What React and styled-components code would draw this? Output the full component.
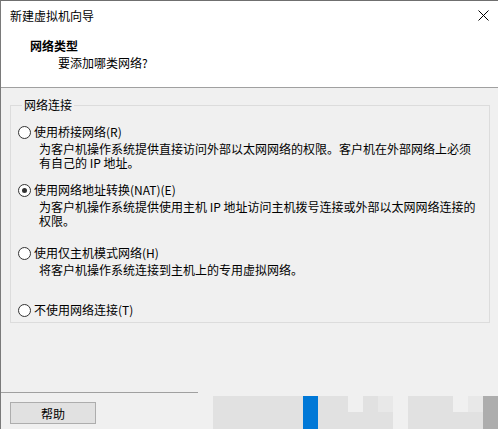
import React from 'react';
import styled, { createGlobalStyle } from 'styled-components';

const GlobalStyle = createGlobalStyle`
  html, body {
    margin: 0;
    padding: 0;
    background: #f0f0f0;
  }
  body {
    font-family: "Noto Sans CJK SC", "Noto Sans", sans-serif;
    font-size: 12px;
    color: #000;
  }
`;

// данные для вариантов подключения
const options = [
  {
    id: 'bridge',
    label: '使用桥接网络(R)',
    lines: ['为客户机操作系统提供直接访问外部以太网网络的权限。客户机在外部网络上必须', '有自己的 IP 地址。'],
    gap: 13,
  },
  {
    id: 'nat',
    label: '使用网络地址转换(NAT)(E)',
    lines: ['为客户机操作系统提供使用主机 IP 地址访问主机拨号连接或外部以太网网络连接的', '权限。'],
    gap: 13,
    checked: true,
  },
  {
    id: 'host',
    label: '使用仅主机模式网络(H)',
    lines: ['将客户机操作系统连接到主机上的专用虚拟网络。'],
    gap: 18,
  },
  {
    id: 'none',
    label: '不使用网络连接(T)',
    lines: [],
    gap: 26,
  },
];

// пикселизованный блок кнопок справа внизу (верх / низ)
const mosaic = [
  ['#e1e1e1', '#e1e1e1'], ['#e1e1e1', '#e1e1e1'], ['#e1e1e1', '#e1e1e1'],
  ['#e1e1e1', '#e1e1e1'], ['#e1e1e1', '#e1e1e1'], ['#e1e1e1', '#e1e1e1'],
  ['#0078d7', '#0078d7'], ['#e1e1e1', '#e1e1e1'], ['#e1e1e1', '#e1e1e1'],
  ['#f0f0f0', '#e1e1e1'], ['#e1e1e1', '#e1e1e1'], ['#e8e8e8', '#e1e1e1'],
  ['#f0f0f0', '#f0f0f0'], ['#e1e1e1', '#e1e1e1'], ['#e1e1e1', '#e1e1e1'],
  ['#e1e1e1', '#e1e1e1'], ['#f0f0f0', '#e1e1e1'], ['#e8e8e8', '#e1e1e1'],
  ['#adadad', '#adadad'],
];

const Window = styled.div`
  width: 498px;
  height: 429px;
  box-sizing: border-box;
  border-top: 1px solid #6f6f6f;
  border-left: 1px solid #7a7a7a;
  display: flex;
  flex-direction: column;
  background: #f0f0f0;
  overflow: hidden;
`;

const TitleBar = styled.div`
  height: 29px;
  background: #fff;
  display: flex;
  align-items: center;
  justify-content: space-between;
  padding: 0 9px 0 9px;
  line-height: 14px;
`;

const Header = styled.div`
  height: 58px;
  box-sizing: border-box;
  background: #fff;
  border-bottom: 1px solid #a0a0a0;
  padding: 9px 0 0 29px;
`;

const HeaderTitle = styled.div`
  font-weight: bold;
  line-height: 14px;
`;

const HeaderSub = styled.div`
  line-height: 14px;
  margin: 3px 0 0 28px;
`;

const Body = styled.div`
  flex: 1;
  padding: 10px 8px 0 9px;
`;

const Group = styled.fieldset`
  margin: 0;
  padding: 0 0 0 7px;
  border: 1px solid #dcdcdc;
  height: 225px;
  box-sizing: border-box;
  min-width: 0;
`;

const Legend = styled.legend`
  padding: 0 2px;
  margin-left: 4px;
  line-height: 14px;
`;

const Option = styled.div`
  margin-top: ${(p) => p.$gap}px;
`;

const RadioRow = styled.div`
  display: flex;
  align-items: center;
  gap: 3px;
  line-height: 14px;
  white-space: nowrap;
`;

const Radio = styled.span`
  width: 13px;
  height: 13px;
  box-sizing: border-box;
  border-radius: 50%;
  border: 1px solid #333;
  background: #fff;
  display: flex;
  align-items: center;
  justify-content: center;
  flex-shrink: 0;

  &::after {
    content: '';
    width: 5px;
    height: 5px;
    border-radius: 50%;
    background: ${(p) => (p.$checked ? '#333' : 'transparent')};
  }
`;

const Desc = styled.div`
  margin: 3px 0 0 21px;
  line-height: 14px;
  white-space: nowrap;
`;

const Footer = styled.div`
  height: 37px;
  display: flex;
  flex-direction: column;
`;

const Separator = styled.div`
  width: 197px;
  height: 1px;
  background: #a0a0a0;
`;

const ButtonRow = styled.div`
  display: flex;
  align-items: flex-start;
`;

const Button = styled.button`
  margin: 9px 0 0 9px;
  width: 86px;
  height: 22px;
  box-sizing: border-box;
  background: #e1e1e1;
  border: 1px solid #adadad;
  font-family: inherit;
  font-size: 12px;
  padding: 0;
  color: #000;
`;

const Mosaic = styled.div`
  margin: 3px 0 0 auto;
  display: grid;
  grid-template-columns: repeat(19, 15px);
  grid-template-rows: 16px 17px;
  grid-auto-flow: column;
`;

const Cell = styled.div`
  background: ${(p) => p.$color};
`;

const CloseIcon = () => (
  <svg width="11" height="11" viewBox="0 0 11 11">
    <path d="M0.5 0.5 L10.5 10.5 M10.5 0.5 L0.5 10.5" stroke="#000" strokeWidth="1" fill="none" />
  </svg>
);

const App = () => {
  return (
    <>
      <GlobalStyle />
      <Window>
        <TitleBar>
          <span>新建虚拟机向导</span>
          <CloseIcon />
        </TitleBar>
        <Header>
          <HeaderTitle>网络类型</HeaderTitle>
          <HeaderSub>要添加哪类网络?</HeaderSub>
        </Header>
        <Body>
          <Group>
            <Legend>网络连接</Legend>
            {options.map((o) => (
              <Option key={o.id} $gap={o.gap}>
                <RadioRow>
                  <Radio $checked={o.checked} />
                  <span>{o.label}</span>
                </RadioRow>
                {o.lines.length > 0 && (
                  <Desc>
                    {o.lines.map((l, i) => (
                      <div key={i}>{l}</div>
                    ))}
                  </Desc>
                )}
              </Option>
            ))}
          </Group>
        </Body>
        <Footer>
          <Separator />
          <ButtonRow>
            <Button>帮助</Button>
            <Mosaic>
              {mosaic.map((col, i) =>
                col.map((c, j) => <Cell key={i + '-' + j} $color={c} />)
              )}
            </Mosaic>
          </ButtonRow>
        </Footer>
      </Window>
    </>
  );
};

export default App;
